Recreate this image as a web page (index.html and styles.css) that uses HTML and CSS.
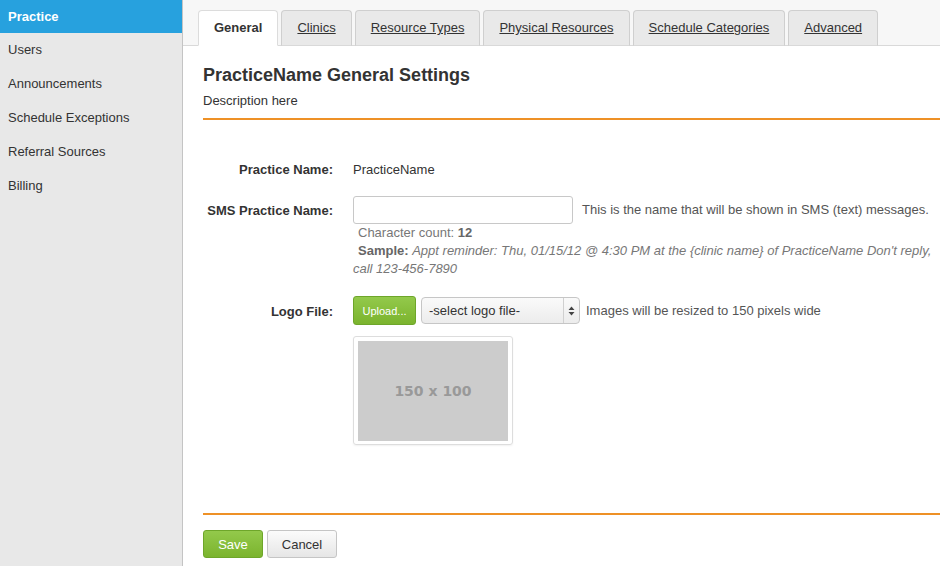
FILE: index.html
```html
<!DOCTYPE html>
<html>
<head>
<meta charset="utf-8">
<link rel="stylesheet" href="styles.css">
</head>
<body>
<div class="app">
  <nav class="sidebar">
    <a class="nav-item active">Practice</a>
    <a class="nav-item">Users</a>
    <a class="nav-item">Announcements</a>
    <a class="nav-item">Schedule Exceptions</a>
    <a class="nav-item">Referral Sources</a>
    <a class="nav-item">Billing</a>
  </nav>
  <main class="main">
    <div class="tabbar">
      <span class="tab active">General</span>
      <span class="tab"><u>Clinics</u></span>
      <span class="tab"><u>Resource Types</u></span>
      <span class="tab"><u>Physical Resources</u></span>
      <span class="tab"><u>Schedule Categories</u></span>
      <span class="tab"><u>Advanced</u></span>
    </div>
    <div class="content">
      <h1 class="title">PracticeName General Settings</h1>
      <p class="desc">Description here</p>
      <div class="rule"></div>
      <div class="form">
        <div class="row row-name">
          <div class="label">Practice Name:</div>
          <div class="value">PracticeName</div>
        </div>
        <div class="row row-sms">
          <div class="label label-mid">SMS Practice Name:</div>
          <div class="value">
            <div class="inline">
              <input class="text-input" type="text">
              <span class="help">This is the name that will be shown in SMS (text) messages.</span>
            </div>
            <div class="hint">
              <div class="hint-line">Character count: <b>12</b></div>
              <div class="hint-line"><b>Sample:</b> <i>Appt reminder: Thu, 01/15/12 @ 4:30 PM at the {clinic name} of PracticeName Don't reply, call 123-456-7890</i></div>
            </div>
          </div>
        </div>
        <div class="row row-logo">
          <div class="label label-logo">Logo File:</div>
          <div class="value">
            <div class="inline">
              <button class="btn btn-green btn-small">Upload...</button>
              <div class="select">
                <span>-select logo file-</span>
                <span class="select-arrow">
                  <svg width="7" height="10" viewBox="0 0 7 10"><path d="M3.5 0.5 L6.5 4 H0.5 Z M3.5 9.5 L6.5 6 H0.5 Z" fill="#444"/></svg>
                </span>
              </div>
              <span class="help help-logo">Images will be resized to 150 pixels wide</span>
            </div>
            <div class="thumb"><div class="thumb-img">150 x 100</div></div>
          </div>
        </div>
      </div>
      <div class="rule rule-bottom"></div>
      <div class="actions">
        <button class="btn btn-green btn-save">Save</button>
        <button class="btn btn-default">Cancel</button>
      </div>
    </div>
  </main>
</div>
</body>
</html>
```

FILE: styles.css
```css
* { box-sizing: border-box; }
html, body {
  margin: 0;
  padding: 0;
  height: 100%;
  background: #fff;
}
body {
  font-family: "Liberation Sans", Arial, Helvetica, sans-serif;
  font-size: 13px;
  color: #333;
}
.app {
  display: flex;
  height: 566px;
  overflow: hidden;
}
.sidebar {
  width: 183px;
  flex-shrink: 0;
  background: #e8e8e8;
  border-right: 1px solid #c4c4c4;
  display: flex;
  flex-direction: column;
}
.nav-item {
  display: block;
  height: 34px;
  line-height: 34px;
  padding-left: 8px;
  color: #333;
  font-size: 13px;
}
.nav-item.active {
  background: #27a1de;
  color: #fff;
  font-weight: bold;
  height: 33px;
  line-height: 33px;
}
.main {
  flex: 1;
  min-width: 0;
}
.tabbar {
  height: 46px;
  background: #f7f7f7;
  border-bottom: 1px solid #d9d9d9;
  padding: 10px 0 0 15px;
  display: flex;
  align-items: flex-end;
}
.tab {
  height: 36px;
  margin-bottom: -1px;
  padding: 0 15px;
  margin-right: 3px;
  border: 1px solid #cfcfcf;
  border-bottom-color: #d9d9d9;
  border-radius: 4px 4px 0 0;
  background: #e9e9e9;
  line-height: 34px;
  font-size: 13px;
  color: #333;
  white-space: nowrap;
}
.tab u { text-decoration: underline; }
.tab.active {
  background: #fff;
  border-color: #dcdcdc;
  border-bottom-color: #fff;
  font-weight: bold;
  padding: 0 15px;
}
.content {
  padding-left: 20px;
}
.title {
  margin: 18px 0 0;
  font-size: 18px;
  line-height: 22px;
  font-weight: bold;
  color: #333;
}
.desc {
  margin: 6px 0 0;
  font-size: 13px;
  line-height: 18px;
}
.rule {
  height: 2px;
  background: #ee9126;
  margin-top: 8px;
}
.form {
  padding-top: 41px;
}
.row {
  display: flex;
  align-items: flex-start;
}
.label {
  width: 130px;
  text-align: right;
  font-weight: bold;
  margin-right: 20px;
  line-height: 18px;
  flex-shrink: 0;
}
.value {
  line-height: 18px;
}
.row-sms { margin-top: 17px; }
.label-mid { padding-top: 6px; }
.label-logo { padding-top: 7px; }
.inline {
  display: flex;
  align-items: center;
}
.text-input {
  width: 220px;
  height: 28px;
  border: 1px solid #c8c8c8;
  border-radius: 3px;
  margin: 0;
  padding: 4px 6px;
  font: inherit;
}
.help {
  margin-left: 9px;
  color: #555;
}
.hint {
  margin-top: 0;
  color: #777;
  font-size: 13px;
  line-height: 18px;
}
.hint-line:first-child { padding-left: 5px; }
.hint-line + .hint-line { text-indent: 5px; }
.hint b { color: #666; }
.row-logo { margin-top: 18px; }
.btn {
  font-family: "Liberation Sans", Arial, Helvetica, sans-serif;
  border-radius: 3px;
  cursor: pointer;
  margin: 0;
}
.btn-green {
  background: linear-gradient(#93c94b, #7bb42e);
  border: 1px solid #6ea62a;
  color: #fff;
}
.btn-small {
  width: 63px;
  height: 29px;
  font-size: 11px;
  padding: 0;
}
.select {
  margin-left: 5px;
  width: 159px;
  height: 27px;
  border: 1px solid #c6c6c6;
  border-radius: 4px;
  background: linear-gradient(#fafafa, #ececec);
  display: flex;
  align-items: center;
  justify-content: space-between;
  padding-left: 7px;
  font-size: 13px;
  color: #333;
}
.select-arrow {
  width: 16px;
  height: 100%;
  border-left: 1px solid #d0d0d0;
  display: flex;
  align-items: center;
  justify-content: center;
}
.help-logo { margin-left: 6px; }
.thumb {
  margin-top: 11px;
  width: 160px;
  height: 109px;
  border: 1px solid #ddd;
  border-radius: 3px;
  padding: 4px;
  box-shadow: 0 1px 2px rgba(0,0,0,0.06);
}
.thumb-img {
  width: 150px;
  height: 100px;
  background: #cccccc;
  color: #999;
  font-family: "DejaVu Sans", sans-serif;
  font-size: 14px;
  font-weight: bold;
  display: flex;
  align-items: center;
  justify-content: center;
}
.rule-bottom { margin-top: 68px; }
.actions {
  margin-top: 15px;
  display: flex;
}
.btn-save {
  width: 60px;
  height: 28px;
  font-size: 13px;
  padding: 0;
}
.btn-default {
  margin-left: 4px;
  width: 70px;
  height: 28px;
  font-size: 13px;
  padding: 0;
  background: linear-gradient(#fbfbfb, #e6e6e6);
  border: 1px solid #c5c5c5;
  color: #333;
}
```
